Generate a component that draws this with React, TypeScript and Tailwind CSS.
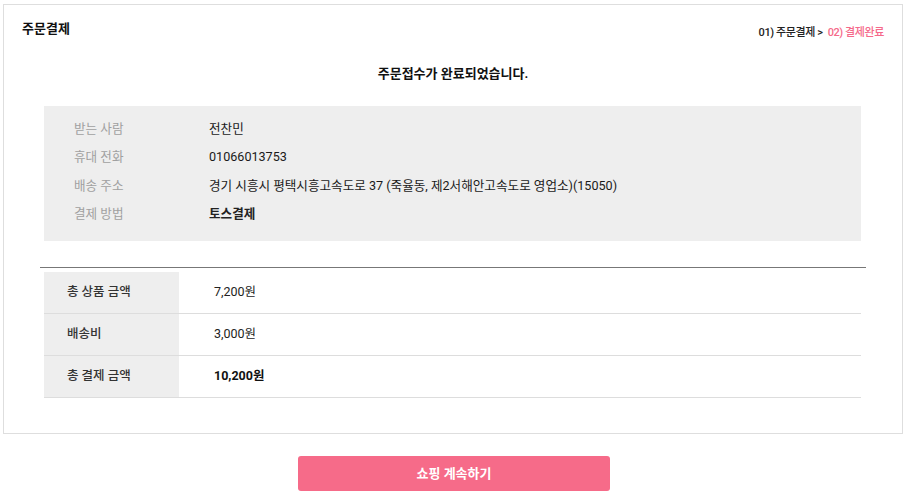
import React from "react";

const font = { fontFamily: "Roboto, 'Noto Sans CJK KR', sans-serif" };

export default function App() {
  const info = [
    ["받는 사람", "전찬민", false],
    ["휴대 전화", "01066013753", false],
    ["배송 주소", "경기 시흥시 평택시흥고속도로 37 (죽율동, 제2서해안고속도로 영업소)(15050)", false],
    ["결제 방법", "토스결제", true],
  ] as const;
  const rows = [
    ["총 상품 금액", "7,200원", false],
    ["배송비", "3,000원", false],
    ["총 결제 금액", "10,200원", true],
  ] as const;
  return (
    <div className="w-[908px] h-[501px] bg-white text-[#222]" style={font}>
      <div className="pt-[4px] pl-[3px]">
        <div className="w-[900px] border border-[#dedede] pb-[35px]">
          <div className="flex justify-between items-start px-[18px] pt-[15px] h-[50px]">
            <div className="text-[13px] font-bold leading-[18px] text-[#111]">주문결제</div>
            <div className="text-[11px] leading-[14px] mt-[6px] tracking-[-0.4px] font-medium">
              <span className="text-[#222]">01) 주문결제 &gt;</span>
              <span className="text-[#f5698a] ml-[5px]">02) 결제완료</span>
            </div>
          </div>
          <div className="text-center text-[13px] font-bold leading-[20px] mt-[9px] text-[#111]">
            주문접수가 완료되었습니다.
          </div>
          <div className="ml-[40px] mr-[41px] mt-[22px] bg-[#eeeeee] pt-[9px] pb-[12px] pl-[30px]">
            {info.map(([l, v, b]) => (
              <div key={l} className="flex h-[28.5px] items-center text-[12.6px]">
                <div className="w-[135px] text-[#a0a0a0]">{l}</div>
                <div className={b ? "font-bold text-[#222]" : "text-[#1a1a1a]"}>{v}</div>
              </div>
            ))}
          </div>
          <div className="mx-[36px] mt-[26px] border-t border-[#777]" />
          <div className="ml-[40px] mr-[41px] mt-[4px]">
            {rows.map(([l, v, b]) => (
              <div key={l} className="flex h-[42px] border-b border-[#dddddd] text-[12.5px]">
                <div className="w-[135px] bg-[#eeeeee] flex items-center pl-[23px] font-medium text-[#333]">{l}</div>
                <div className={"flex items-center pl-[35px] " + (b ? "font-bold text-[#111]" : "text-[#222]")}>{v}</div>
              </div>
            ))}
          </div>
        </div>
      </div>
      <div className="flex justify-center mt-[22px]">
        <button className="w-[312px] h-[35px] rounded-[3px] bg-[#f66b89] text-white text-[13px] font-bold" style={font}>
          쇼핑 계속하기
        </button>
      </div>
    </div>
  );
}
